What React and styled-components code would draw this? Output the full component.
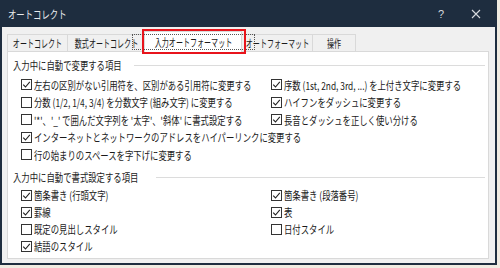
import React from "react";
import styled, { createGlobalStyle } from "styled-components";

const GlobalStyle = createGlobalStyle`
  html, body {
    margin: 0;
    padding: 0;
    background: #f0ebe1;
  }
  body {
    font-family: "Noto Sans CJK JP", "Noto Sans", sans-serif;
  }
`;

const section1 = [
  { label: "左右の区別がない引用符を、区別がある引用符に変更する", on: true },
  { label: "分数 (1/2, 1/4, 3/4) を分数文字 (組み文字) に変更する", on: false },
  { label: "'*'、'_' で囲んだ文字列を '太字'、'斜体' に書式設定する", on: false },
  { label: "インターネットとネットワークのアドレスをハイパーリンクに変更する", on: true },
  { label: "行の始まりのスペースを字下げに変更する", on: false },
  { label: "序数 (1st, 2nd, 3rd, ...) を上付き文字に変更する", on: true },
  { label: "ハイフンをダッシュに変更する", on: true },
  { label: "長音とダッシュを正しく使い分ける", on: true },
];

const section2 = [
  { label: "箇条書き (行頭文字)", on: true },
  { label: "罫線", on: true },
  { label: "既定の見出しスタイル", on: false },
  { label: "結語のスタイル", on: true },
  { label: "箇条書き (段落番号)", on: true },
  { label: "表", on: true },
  { label: "日付スタイル", on: false },
];

const tabs = [
  { label: "オートコレクト", w: 61 },
  { label: "数式オートコレクト", w: 78 },
  { label: "入力オートフォーマット", w: 98, active: true },
  { label: "オートフォーマット", w: 72 },
  { label: "操作", w: 44 },
];

function CheckBox({ on }) {
  return (
    <Box>
      {on && (
        <svg width="9" height="9" viewBox="0 0 9 9">
          <polyline points="1.2,4.6 3.5,7 7.8,1.8" fill="none" stroke="#222" strokeWidth="1.1" />
        </svg>
      )}
    </Box>
  );
}

function Option({ label, on }) {
  return (
    <Item>
      <CheckBox on={on} />
      <Text>{label}</Text>
    </Item>
  );
}

export default function App() {
  return (
    <>
      <GlobalStyle />
      <Window>
        <TitleBar>
          <Text $light>オートコレクト</Text>
          <TitleButtons>
            <Help>?</Help>
            <svg width="10" height="10" viewBox="0 0 10 10">
              <path d="M1 1 L9 9 M9 1 L1 9" stroke="#d6dadf" strokeWidth="1.1" />
            </svg>
          </TitleButtons>
        </TitleBar>
        <Body>
          <TabStrip>
            {tabs.map((t) =>
              t.active ? (
                <ActiveTab key={t.label} $w={t.w}>
                  <Focus>
                    <TabText>{t.label}</TabText>
                  </Focus>
                </ActiveTab>
              ) : (
                <Tab key={t.label} $w={t.w}>
                  <TabText>{t.label}</TabText>
                </Tab>
              )
            )}
          </TabStrip>
          <Panel>
            <Header>
              <Text>入力中に自動で変更する項目</Text>
            </Header>
            <Grid $rows={5} $h={17.5} $top={3}>
              {section1.map((o) => (
                <Option key={o.label} {...o} />
              ))}
            </Grid>
            <Header $top={5.5}>
              <Text>入力中に自動で書式設定する項目</Text>
            </Header>
            <Grid $rows={4} $h={17} $top={1.5}>
              {section2.map((o) => (
                <Option key={o.label} {...o} />
              ))}
            </Grid>
          </Panel>
        </Body>
      </Window>
    </>
  );
}

const Window = styled.div`
  width: 497px;
  height: 265px;
  box-sizing: border-box;
  border: 2px solid #1e2d3f;
  display: flex;
  flex-direction: column;
`;

const TitleBar = styled.div`
  height: 24px;
  flex: none;
  background: #1e2d3f;
  display: flex;
  align-items: center;
  padding: 0 0 1px 6px;
`;

const TitleButtons = styled.div`
  margin-left: auto;
  display: flex;
  align-items: center;
  gap: 27px;
  padding-right: 14px;
`;

const Help = styled.span`
  color: #d6dadf;
  font-family: "Liberation Sans", sans-serif;
  font-size: 11px;
`;

const Text = styled.span`
  display: inline-block;
  font-size: 11px;
  line-height: 14px;
  white-space: nowrap;
  color: ${(p) => (p.$light ? "#e8ebee" : "#1a1a1a")};
  transform: scaleX(0.76);
  transform-origin: left center;
`;

const TabText = styled(Text)`
  flex: none;
  transform: scaleX(0.64);
  transform-origin: center center;
`;

const Body = styled.div`
  flex: 1;
  background: #f0f0f0;
  padding: 4px 6px 4px 5px;
  display: flex;
  flex-direction: column;
`;

const TabStrip = styled.div`
  height: 20px;
  display: flex;
  align-items: flex-end;
  padding-left: 1px;
  position: relative;
  z-index: 1;
`;

const Tab = styled.div`
  width: ${(p) => p.$w}px;
  height: 17px;
  flex: none;
  box-sizing: border-box;
  margin-left: -1px;
  border: 1px solid #d9d9d9;
  border-bottom: none;
  background: #f0f0f0;
  display: flex;
  align-items: center;
  justify-content: center;
`;

const ActiveTab = styled(Tab)`
  height: 21px;
  margin-bottom: -1px;
  padding: 0 3px 1px;
  background: #fff;
  position: relative;

  &::after {
    content: "";
    position: absolute;
    top: -3px;
    left: -3px;
    right: -5px;
    bottom: -2px;
    border: 2px solid #e8141c;
  }
`;

const Focus = styled.div`
  flex: 1;
  height: 14px;
  border: 1px dotted #555;
  display: flex;
  align-items: center;
  justify-content: center;
`;

const Panel = styled.div`
  flex: 1;
  background: #fff;
  border: 1px solid #d9d9d9;
  padding: 5px 3px 0 5px;
`;

const Header = styled.div`
  height: 16px;
  margin-top: ${(p) => p.$top || 0}px;
  display: flex;
  align-items: center;

  &::after {
    content: "";
    flex: 1;
    height: 1px;
    background: #dcdcdc;
    margin-left: -22px;
  }
`;

const Grid = styled.div`
  margin: ${(p) => p.$top}px 0 0 8px;
  display: grid;
  grid-template-columns: 250px 1fr;
  grid-template-rows: repeat(${(p) => p.$rows}, ${(p) => p.$h}px);
  grid-auto-flow: column;
`;

const Item = styled.div`
  display: flex;
  align-items: center;
  gap: 2px;
`;

const Box = styled.div`
  width: 11px;
  height: 11px;
  box-sizing: border-box;
  border: 1px solid #333;
  background: #fff;
  display: flex;
  align-items: center;
  justify-content: center;
  flex: none;
`;
